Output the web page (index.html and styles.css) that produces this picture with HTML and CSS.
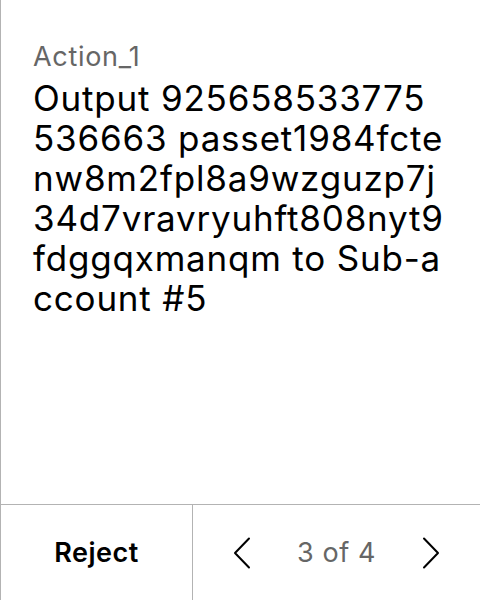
FILE: index.html
```html
<!DOCTYPE html>
<html>
<head>
<meta charset="utf-8">
<link rel="stylesheet" href="styles.css">
</head>
<body>
<div class="panel">
  <div class="content">
    <div class="label">Action_1</div>
    <div class="message">Output 925658533775<br>536663 passet1984fcte<br>nw8m2fpl8a9wzguzp7j<br>34d7vravryuhft808nyt9<br>fdggqxmanqm to Sub-a<br>ccount #5</div>
  </div>
  <div class="footer">
    <button class="reject">Reject</button>
    <div class="pager">
      <button class="nav" aria-label="Previous">
        <svg width="18" height="32" viewBox="0 0 18 32"><path d="M16 1.5 L2 16 L16 30.5" fill="none" stroke="#000" stroke-width="2" stroke-linecap="round" stroke-linejoin="round"/></svg>
      </button>
      <span class="count">3 of 4</span>
      <button class="nav" aria-label="Next">
        <svg width="18" height="32" viewBox="0 0 18 32"><path d="M2 1.5 L16 16 L2 30.5" fill="none" stroke="#000" stroke-width="2" stroke-linecap="round" stroke-linejoin="round"/></svg>
      </button>
    </div>
  </div>
</div>
</body>
</html>
```

FILE: styles.css
```css
html, body {
  margin: 0;
  padding: 0;
  background: #fff;
}
body {
  font-family: Inter, "Noto Sans", sans-serif;
  color: #000;
}
.panel {
  width: 480px;
  height: 600px;
  box-sizing: border-box;
  border-left: 1px solid #b3b3b3;
  display: flex;
  flex-direction: column;
}
.content {
  flex: 1;
  padding: 40px 8px 0 32px;
}
.label {
  font-size: 27px;
  line-height: 34px;
  letter-spacing: 0.7px;
  color: #666;
}
.message {
  margin-top: 4px;
  font-size: 35px;
  line-height: 40px;
  letter-spacing: 0.8px;
  white-space: nowrap;
  color: #000;
}
.footer {
  height: 96px;
  box-sizing: border-box;
  border-top: 1px solid #b3b3b3;
  display: flex;
}
.reject {
  width: 192px;
  border: 0;
  border-right: 1px solid #b3b3b3;
  background: transparent;
  font-family: inherit;
  font-size: 27px;
  font-weight: 600;
  letter-spacing: 0.5px;
  color: #000;
  padding: 0;
}
.pager {
  flex: 1;
  display: flex;
  align-items: center;
  justify-content: space-between;
  padding: 0 33px 0 33px;
}
.nav {
  border: 0;
  background: transparent;
  padding: 0;
  width: 32px;
  height: 40px;
  display: flex;
  align-items: center;
  justify-content: center;
}
.count {
  font-size: 27px;
  letter-spacing: 0.6px;
  color: #666;
}
```
